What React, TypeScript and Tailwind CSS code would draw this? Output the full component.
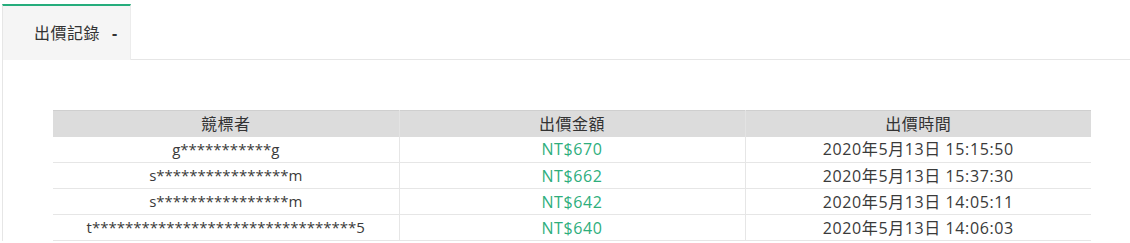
const rows = [
  { name: "g***********g", price: "NT$670", time: "2020年5月13日 15:15:50" },
  { name: "s****************m", price: "NT$662", time: "2020年5月13日 15:37:30" },
  { name: "s****************m", price: "NT$642", time: "2020年5月13日 14:05:11" },
  { name: "t********************************5", price: "NT$640", time: "2020年5月13日 14:06:03" },
];

export default function App() {
  return (
    <div
      className="w-[1130px] h-[243px] bg-white overflow-hidden pl-[2px] pt-[4px]"
      style={{ fontFamily: '"Open Sans", "Noto Sans CJK TC", sans-serif' }}
    >
      <div className="flex">
        <div className="w-[129px] h-[56px] bg-[#f5f5f5] border-t-[2px] border-[#26ad7c] border-l border-l-[#e6e6e6] border-r border-r-[#ececec] flex items-center pl-[31px] text-[16px] text-[#333]">
          <span className="tracking-[0.5px]">出價記錄</span>
          <span className="ml-[12px] font-bold">-</span>
        </div>
        <div className="flex-1 border-b border-[#e6e6e6]" />
      </div>
      <div className="border-l border-[#e6e6e6] pt-[50px] pl-[50px] pr-[38px]">
        <table className="w-[1038px] border-collapse text-[16px] text-[#333] table-fixed">
          <thead>
            <tr className="bg-[#dcdcdc] h-[26px]">
              <th className="font-normal border-t border-[#cfcfcf] border-r border-r-[#e3e3e3] tracking-[0.5px]">競標者</th>
              <th className="font-normal border-t border-[#cfcfcf] border-r border-r-[#e3e3e3] tracking-[0.5px]">出價金額</th>
              <th className="font-normal border-t border-[#cfcfcf] tracking-[0.5px]">出價時間</th>
            </tr>
          </thead>
          <tbody>
            {rows.map((r, i) => (
              <tr key={i} className="h-[26px] border-b border-[#e6e6e6]">
                <td className="text-center border-r border-[#e6e6e6] leading-none text-[15px] text-[#3a3a3a]">{r.name}</td>
                <td className="text-center border-r border-[#e6e6e6] text-[#2eae7c] leading-none tracking-[0.6px]">{r.price}</td>
                <td className="text-center leading-none tracking-[0.6px] text-[#3a3a3a]">{r.time}</td>
              </tr>
            ))}
          </tbody>
        </table>
      </div>
    </div>
  );
}
